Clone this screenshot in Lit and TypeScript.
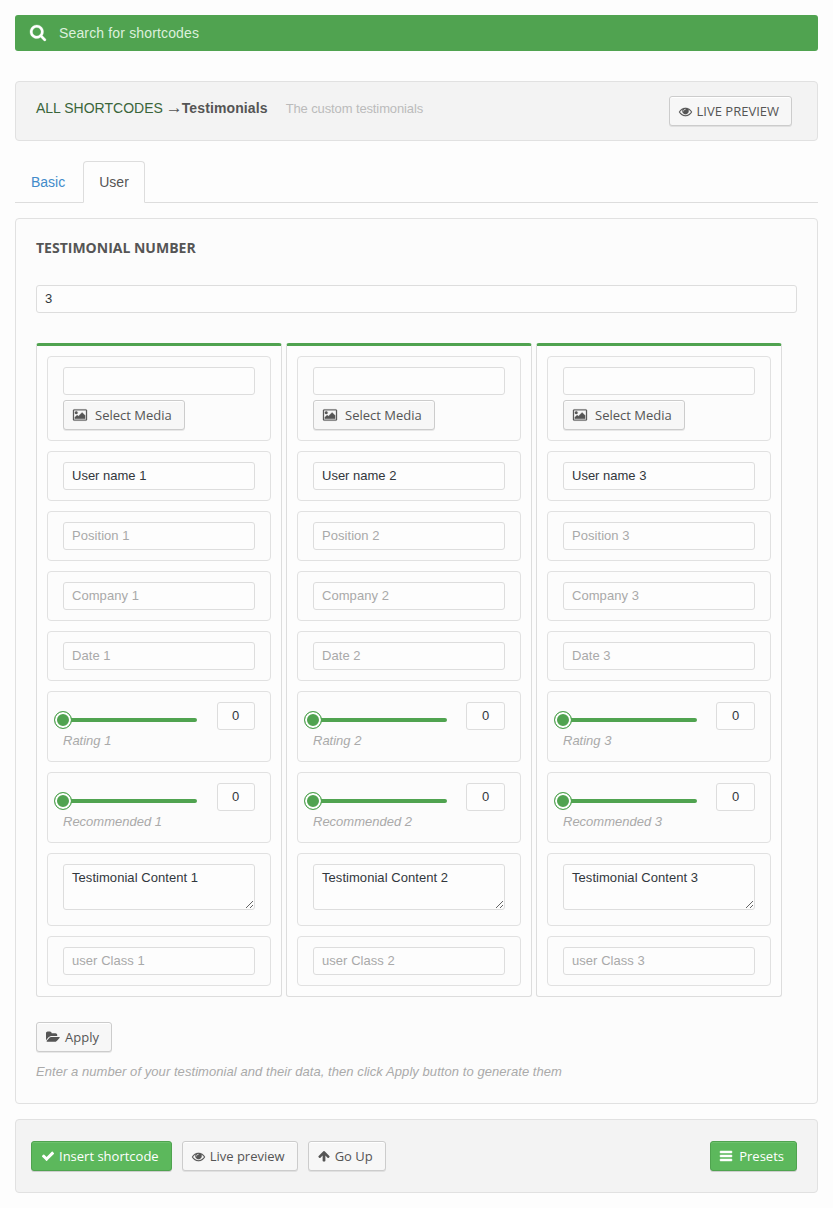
import { LitElement, html, css, svg } from "lit";
import { customElement, property } from "lit/decorators.js";

const glyphs: Record<string, { box: string; w: number; d: string; bold?: number }> = {
  search: { box: "64 128 1664 1664", w: 16, bold: 30, d: "M1216 832q0-185-131.5-316.5t-316.5-131.5-316.5 131.5-131.5 316.5 131.5 316.5 316.5 131.5 316.5-131.5 131.5-316.5zm512 832q0 52-38 90t-90 38q-54 0-90-38l-343-342q-179 124-399 124-143 0-273.5-55.5t-225-150-150-225-55.5-273.5 55.5-273.5 150-225 225-150 273.5-55.5 273.5 55.5 225 150 150 225 55.5 273.5q0 220-124 399l343 343q37 37 37 90z" },
  eye: { box: "0 0 1792 1792", w: 13, bold: 20, d: "M1664 960q-152-236-381-353 61 104 61 225 0 185-131.5 316.5t-316.5 131.5-316.5-131.5-131.5-316.5q0-121 61-225-229 117-381 353 133 205 333.5 326.5t434.5 121.5 434.5-121.5 333.5-326.5zm-720-384q0-20-14-34t-34-14q-125 0-214.5 89.5t-89.5 214.5q0 20 14 34t34 14 34-14 14-34q0-86 61-147t147-61q20 0 34-14t14-34zm848 384q0 34-20 69-140 230-376.5 368.5t-499.5 138.5-499.5-139-376.5-368q-20-35-20-69t20-69q140-229 376.5-368t499.5-139 499.5 139 376.5 368q20 35 20 69z" },
  picture: { box: "64 0 1920 1792", w: 14, bold: 40, d: "M704 576q0 80-56 136t-136 56-136-56-56-136 56-136 136-56 136 56 56 136zm1024 384v448h-1408v-192l320-320 160 160 512-512zm96-704h-1600q-13 0-22.5 9.5t-9.5 22.5v1216q0 13 9.5 22.5t22.5 9.5h1600q13 0 22.5-9.5t9.5-22.5v-1216q0-13-9.5-22.5t-22.5-9.5zm160 32v1216q0 66-47 113t-113 47h-1600q-66 0-113-47t-47-113v-1216q0-66 47-113t113-47h1600q66 0 113 47t47 113z" },
  folder: { box: "0 0 1920 1792", w: 14, d: "M1879 952q0 31-31 66l-336 396q-43 51-120.5 86.5t-143.5 35.5h-1088q-34 0-60.5-13t-26.5-43q0-31 31-66l336-396q43-51 120.5-86.5t143.5-35.5h1088q34 0 60.5 13t26.5 43zm-343-344v160h-832q-94 0-197 47.5t-164 119.5l-337 396-5 6q0-4-.5-12.5t-.5-12.5v-960q0-92 66-158t158-66h320q92 0 158 66t66 158v32h544q92 0 158 66t66 158z" },
  check: { box: "0 0 1792 1792", w: 14, d: "M1671 566q0 40-28 68l-724 724-136 136q-28 28-68 28t-68-28l-136-136-362-362q-28-28-28-68t28-68l136-136q28-28 68-28t68 28l294 295 656-657q28-28 68-28t68 28l136 136q28 28 28 68z" },
  up: { box: "64 64 1664 1664", w: 12, d: "M1675 971q0 51-37 90l-75 75q-38 38-91 38-54 0-90-38l-294-293v704q0 52-37.5 84.5t-90.5 32.5h-128q-53 0-90.5-32.5t-37.5-84.5v-704l-294 293q-36 38-90 38t-90-38l-75-75q-38-38-38-90 0-53 38-91l651-651q35-37 90-37 54 0 91 37l651 651q37 39 37 91z" },
  bars: { box: "128 128 1536 1536", w: 12, bold: 60, d: "M1664 1344v128q0 26-19 45t-45 19h-1408q-26 0-45-19t-19-45v-128q0-26 19-45t45-19h1408q26 0 45 19t19 45zm0-512v128q0 26-19 45t-45 19h-1408q-26 0-45-19t-19-45v-128q0-26 19-45t45-19h1408q26 0 45 19t19 45zm0-512v128q0 26-19 45t-45 19h-1408q-26 0-45-19t-19-45v-128q0-26 19-45t45-19h1408q26 0 45 19t19 45z" },
};

const icon = (name: string) => {
  const g = glyphs[name];
  return html`<svg class="icon" width=${g.w} height=${g.w} viewBox=${g.box} fill="currentColor" stroke="currentColor" stroke-width=${g.bold ?? 0}>${svg`<path d=${g.d}></path>`}</svg>`;
};

const shared = css`
  * { box-sizing: border-box; }
  .icon { display: block; flex: none; overflow: visible; }
  .btn {
    display: inline-flex; align-items: center; height: 30px; padding: 0 12px 0 9px;
    border: 1px solid #ccc; border-radius: 3px; background: #f7f7f7; color: #555;
    box-shadow: inset 0 1px 0 #fff, 0 1px 0 rgba(0, 0, 0, 0.08);
    font: 13px "Open Sans", sans-serif; white-space: nowrap; gap: 5px;
  }
  .btn.green {
    gap: 4px; background: #5cb85c; border-color: #4fa34f; color: #fff;
    box-shadow: inset 0 1px 0 rgba(120, 200, 120, 0.6), 0 1px 0 rgba(0, 0, 0, 0.15);
  }
  input, textarea {
    display: block; width: 100%; height: 28px; margin: 0; padding: 0 8px 2px;
    border: 1px solid #ddd; border-radius: 3px; background: #fdfdfd; color: #32373c;
    font: 13px "Liberation Sans", Arial, sans-serif; outline: none;
  }
  input::placeholder { color: #a9a9a9; opacity: 1; letter-spacing: 0.05px; }
  .hint { font-style: italic; color: #aaa; font-size: 13px; line-height: 18px; }
`;

@customElement("user-column")
class UserColumn extends LitElement {
  @property({ type: Number }) n = 1;

  static styles = [shared, css`
    :host {
      box-sizing: border-box; display: flex; flex-direction: column; gap: 10px; width: 246px;
      padding: 10px; border: 1px solid #ddd; border-top: 3px solid #50a350;
      border-radius: 3px; background: #fdfdfd;
    }
    .box { border: 1px solid #e1e1e1; border-radius: 4px; padding: 10px 15px; background: #fcfcfc; }
    .media { height: 85px; }
    .media .btn { margin-top: 5px; gap: 8px; }
    .range { height: 71px; }
    .row { display: flex; justify-content: space-between; height: 28px; }
    .num { width: 38px; padding: 0 1px 2px 0; text-align: center; }
    .num.wide { width: 39px; padding-right: 0; }
    .track { width: 134px; height: 4px; margin-top: 16px; border-radius: 2px; background: #50a350; display: flex; align-items: center; }
    .knob { flex: none; width: 18px; height: 18px; margin-left: -9px; border: 1px solid #50a350; border-radius: 50%; background: #50a350; box-shadow: inset 0 0 0 2px #fff; }
    .area { height: 73px; }
    textarea { height: 46px; padding: 5px 8px; resize: vertical; letter-spacing: 0.05px; }
    .range .hint { margin-top: 2px; }
  `];

  slider(label: string) {
    return html`<div class="box range">
      <div class="row"><div class="track"><div class="knob"></div></div><input class=${this.n > 1 ? "num wide" : "num"} .value=${"0"} /></div>
      <div class="hint">${label} ${this.n}</div>
    </div>`;
  }

  render() {
    const n = this.n;
    return html`
      <div class="box media"><input /><span class="btn">${icon("picture")}Select Media</span></div>
      <div class="box"><input .value=${`User name ${n}`} /></div>
      ${["Position", "Company", "Date"].map((p) => html`<div class="box"><input placeholder=${`${p} ${n}`} /></div>`)}
      ${this.slider("Rating")} ${this.slider("Recommended")}
      <div class="box area"><textarea .value=${`Testimonial Content ${n}`}></textarea></div>
      <div class="box"><input placeholder=${`user Class ${n}`} /></div>`;
  }
}

@customElement("app-root")
class AppRoot extends LitElement {
  static styles = [shared, css`
    :host { box-sizing: border-box; display: block; height: 1208px; padding: 15px; background: #fdfdfd; font-family: "Liberation Sans", Arial, sans-serif; }
    .search { display: flex; align-items: center; gap: 13px; height: 36px; padding: 0 15px; border-radius: 3px; background: #50a350; color: #fff; }
    .search-text { color: #dcf0dc; font-size: 14px; letter-spacing: 0.15px; }
    .bar { display: flex; background: #f3f3f3; border: 1px solid #e1e1e1; border-radius: 4px; }
    .head { height: 60px; margin-top: 30px; padding: 14px 25px 0 20px; }
    .crumbs { flex: 1; display: flex; height: 24px; align-items: center; font-size: 14px; color: #555; white-space: pre; }
    .all { color: #3a653a; }
    .arrow { font-size: 17px; line-height: 14px; margin: 0 -1px; }
    .title { font-weight: bold; letter-spacing: 0.12px; }
    .desc { margin-left: 18px; font-size: 13px; letter-spacing: -0.12px; color: #bbb; }
    .tabs { display: flex; height: 42px; margin-top: 20px; border-bottom: 1px solid #ddd; font-size: 14px; line-height: 20px; }
    .tab { height: 42px; padding: 10px 15px; border: 1px solid transparent; border-radius: 4px 4px 0 0; color: #428bca; }
    .tab.active { margin-left: 2px; border-color: #ddd; border-bottom-color: #fdfdfd; background: #fdfdfd; color: #555; }
    .panel { height: 886px; margin-top: 15px; padding: 19px 20px; border: 1px solid #e1e1e1; border-radius: 4px; background: #fcfcfc; }
    .label { height: 20px; margin-bottom: 27px; font: bold 14px/20px "Open Sans", sans-serif; color: #555; }
    .cols { display: flex; gap: 4px; margin: 30px 0 25px; }
    .note { margin-top: 11px; letter-spacing: 0.06px; }
    .foot { height: 74px; margin-top: 15px; padding: 21px 20px 0 15px; gap: 10px; }
    .btn.presets { margin-left: auto; gap: 7px; }
  `];

  render() {
    return html`
      <div class="search">${icon("search")}<span class="search-text">Search for shortcodes</span></div>
      <div class="bar head">
        <div class="crumbs"><span class="all">ALL SHORTCODES </span><span class="arrow">→</span><span class="title">Testimonials</span><span class="desc">The custom testimonials</span></div>
        <span class="btn">${icon("eye")}LIVE PREVIEW</span>
      </div>
      <div class="tabs"><div class="tab">Basic</div><div class="tab active">User</div></div>
      <div class="panel">
        <div class="label">TESTIMONIAL NUMBER</div>
        <input .value=${"3"} />
        <div class="cols">${[1, 2, 3].map((n) => html`<user-column .n=${n}></user-column>`)}</div>
        <span class="btn">${icon("folder")}Apply</span>
        <div class="hint note">Enter a number of your testimonial and their data, then click Apply button to generate them</div>
      </div>
      <div class="bar foot">
        <span class="btn green">${icon("check")}Insert shortcode</span>
        <span class="btn">${icon("eye")}Live preview</span>
        <span class="btn">${icon("up")}Go Up</span>
        <span class="btn green presets">${icon("bars")}Presets</span>
      </div>`;
  }
}
